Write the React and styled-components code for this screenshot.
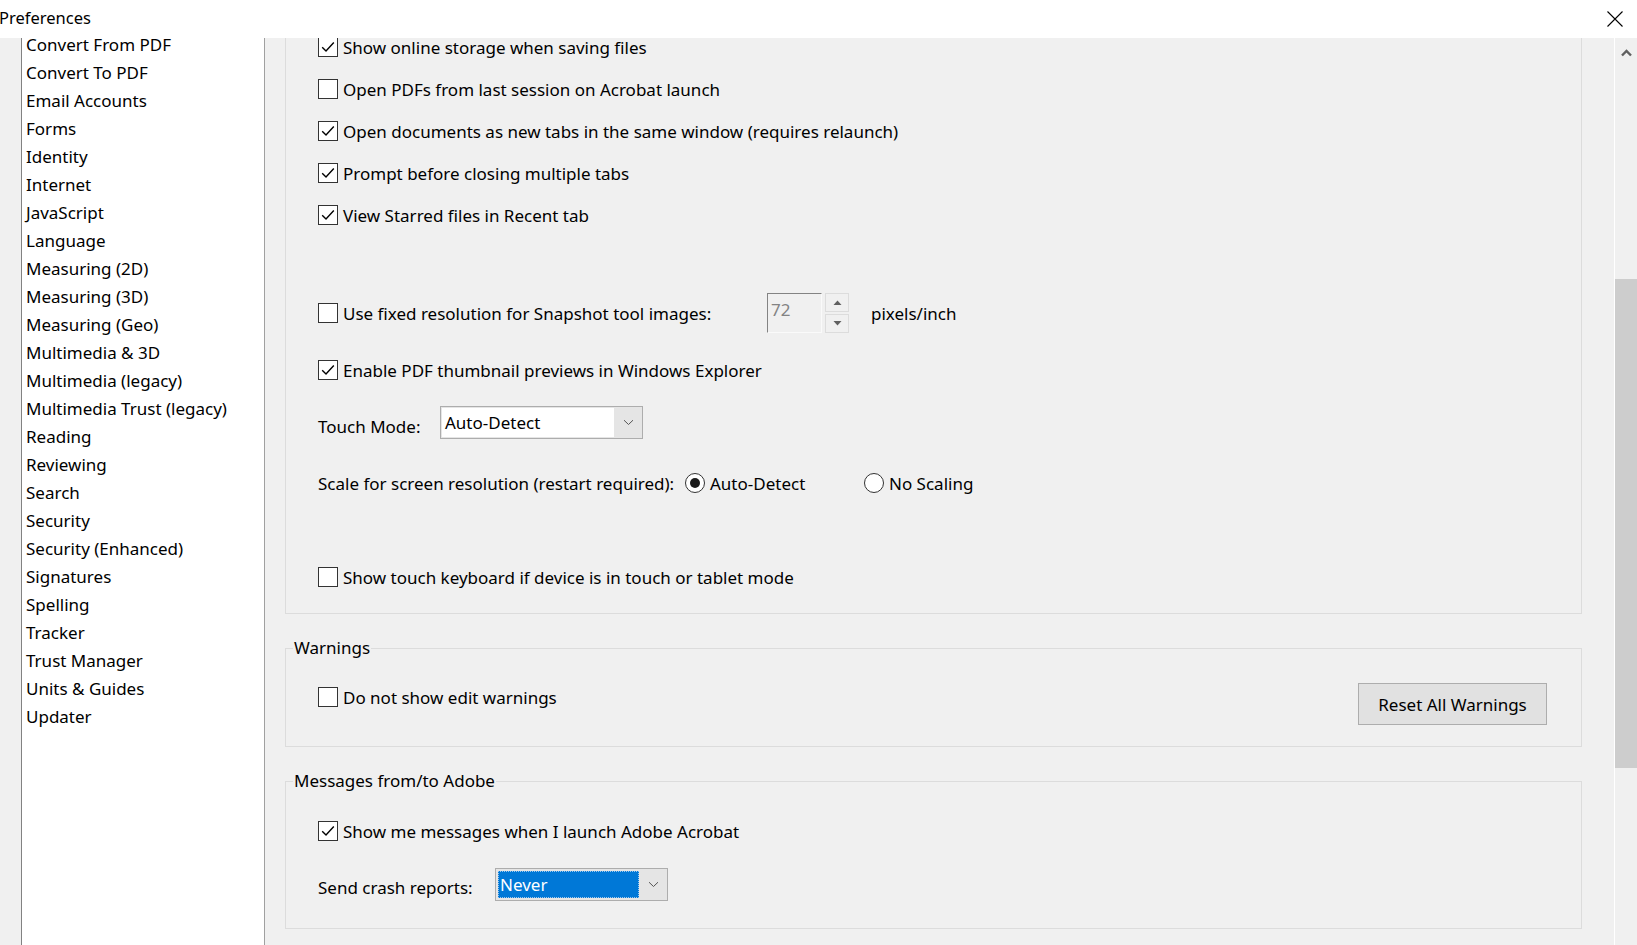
import React from 'react';
import styled, { createGlobalStyle } from 'styled-components';

const GlobalStyle = createGlobalStyle`
  html, body {
    margin: 0;
    padding: 0;
  }

  body {
    background: #f0f0f0;
    color: #000;
    font-family: "Noto Sans", "Open Sans", sans-serif;
    font-size: 17px;
    overflow: hidden;
  }

  * {
    box-sizing: border-box;
  }
`;

const Window = styled.div`
  width: 100vw;
  height: 100vh;
  display: flex;
  flex-direction: column;
  background: #f0f0f0;
`;

const TitleBar = styled.header`
  height: 38px;
  flex: none;
  display: flex;
  align-items: center;
  justify-content: space-between;
  padding-right: 14px;
  background: #fff;
`;

const Title = styled.span`
  font-size: 16.5px;
  line-height: 22px;
  margin-left: -1px;
  margin-top: -2px;
`;

const CloseButton = styled.button`
  width: 16px;
  height: 16px;
  padding: 0;
  border: 0;
  background: none;
  display: flex;
  align-items: center;
  justify-content: center;
`;

const Body = styled.div`
  flex: 1;
  min-height: 0;
  display: flex;
  padding-left: 21px;
`;

const Sidebar = styled.nav`
  width: 244px;
  flex: none;
  background: #fff;
  border-left: 1px solid #828282;
  border-right: 1px solid #a0a0a0;
`;

const SideList = styled.ul`
  list-style: none;
  margin: -7px 0 0;
  padding: 0 0 0 4px;
`;

const SideItem = styled.li`
  height: 28px;
  line-height: 28px;
  white-space: nowrap;
`;

const Content = styled.main`
  flex: 1;
  min-width: 0;
  display: flex;
`;

const ScrollArea = styled.div`
  flex: 1;
  overflow: hidden;
  padding: 0 32px 0 20px;
`;

const ScrollInner = styled.div`
  margin-top: ${(p) => -p.$scroll}px;
  display: flex;
  flex-direction: column;
`;

const Group = styled.fieldset`
  margin: ${(p) => p.$top || 0}px 0 0;
  padding: 0;
  min-width: 0;
  border: 1px solid #dcdcdc;
`;

const Legend = styled.legend`
  margin-left: 7px;
  padding: 0 1px;
  line-height: 24px;
  font-size: 17px;
`;

const GroupBody = styled.div`
  display: flex;
  flex-direction: column;
  padding: ${(p) => p.$pt || 0}px 32px ${(p) => p.$pb || 0}px 32px;
`;

const Row = styled.div`
  height: 42px;
  margin-top: ${(p) => p.$top || 0}px;
  display: flex;
  align-items: center;
`;

const SplitRow = styled.div`
  display: flex;
  align-items: flex-start;
  justify-content: space-between;
  padding-right: 2px;
`;

const CheckLabel = styled.label`
  display: flex;
  align-items: center;
  gap: 5px;
  width: ${(p) => (p.$width ? `${p.$width}px` : 'auto')};
  height: 42px;
  white-space: nowrap;
`;

const Box = styled.span`
  width: 20px;
  height: 20px;
  flex: none;
  display: flex;
  align-items: center;
  justify-content: center;
  background: #fff;
  border: 1px solid #333;
`;

const RadioDot = styled.span`
  width: 20px;
  height: 20px;
  flex: none;
  display: flex;
  align-items: center;
  justify-content: center;
  border-radius: 50%;
  background: #fff;
  border: 1px solid #333;

  &::after {
    content: '';
    display: ${(p) => (p.$on ? 'block' : 'none')};
    width: 10px;
    height: 10px;
    border-radius: 50%;
    background: #1a1a1a;
  }
`;

const RadioOption = styled.label`
  display: flex;
  align-items: center;
  gap: 5px;
  width: ${(p) => (p.$width ? `${p.$width}px` : 'auto')};
  white-space: nowrap;
`;

const FieldLabel = styled.span`
  min-width: ${(p) => p.$width}px;
  margin-top: ${(p) => p.$drop || 0}px;
  white-space: nowrap;
`;

const SpinField = styled.div`
  width: 55px;
  height: 40px;
  padding: 5px 0 0 3px;
  color: #838383;
  background: #f0f0f0;
  border-top: 1px solid #838383;
  border-left: 1px solid #838383;
  border-right: 1px solid #fafafa;
  border-bottom: 1px solid #fafafa;
  line-height: 22px;
`;

const SpinButtons = styled.div`
  margin-left: 3px;
  display: flex;
  flex-direction: column;
  gap: 2px;
`;

const SpinButton = styled.span`
  width: 24px;
  height: 19px;
  display: flex;
  align-items: center;
  justify-content: center;
  background: #f0f0f0;
  border: 1px solid #dcdcdc;
`;

const Unit = styled.span`
  margin-left: 22px;
`;

const Select = styled.div`
  width: ${(p) => p.$width}px;
  height: 33px;
  display: flex;
  padding: 1px 0 1px 1px;
  background: #e5e5e5;
  border: 1px solid #adadad;
`;

const SelectValue = styled.div`
  flex: 1;
  display: flex;
  align-items: center;
  padding-left: ${(p) => (p.$selected ? 2 : 3)}px;
  color: ${(p) => (p.$selected ? '#fff' : '#000')};
  background: ${(p) => (p.$selected ? '#0078d7' : '#fff')};
  outline: ${(p) => (p.$selected ? '1px dotted #9cc8ee' : 'none')};
  outline-offset: -1px;
  margin: ${(p) => (p.$selected ? '1px 0 1px 1px' : '0')};
`;

const SelectArrow = styled.div`
  width: 28px;
  flex: none;
  display: flex;
  align-items: center;
  justify-content: center;
`;

const ResetButton = styled.button`
  width: 189px;
  height: 42px;
  margin-top: 7px;
  padding: 0;
  font: inherit;
  color: #000;
  background: #e1e1e1;
  border: 1px solid #adadad;
`;

const ScrollBar = styled.div`
  width: 23px;
  flex: none;
  display: flex;
  flex-direction: column;
  background: #f0f0f0;
  border-left: 1px solid #fff;
`;

const ScrollArrow = styled.div`
  height: 30px;
  flex: none;
  display: flex;
  align-items: center;
  justify-content: center;
`;

const ScrollThumb = styled.div`
  flex: none;
  background: #cdcdcd;
`;

const sections = [
  'Convert From PDF',
  'Convert To PDF',
  'Email Accounts',
  'Forms',
  'Identity',
  'Internet',
  'JavaScript',
  'Language',
  'Measuring (2D)',
  'Measuring (3D)',
  'Measuring (Geo)',
  'Multimedia & 3D',
  'Multimedia (legacy)',
  'Multimedia Trust (legacy)',
  'Reading',
  'Reviewing',
  'Search',
  'Security',
  'Security (Enhanced)',
  'Signatures',
  'Spelling',
  'Tracker',
  'Trust Manager',
  'Units & Guides',
  'Updater',
];

const Check = ({ checked }) => (
  <Box>
    {checked && (
      <svg width="16" height="16" viewBox="0 0 16 16">
        <path d="M2.2 8.2 L6 12 L13.8 3.6" fill="none" stroke="#000" strokeWidth="1.4" />
      </svg>
    )}
  </Box>
);

const CheckOption = ({ checked, children, width }) => (
  <CheckLabel $width={width}>
    <Check checked={checked} />
    {children}
  </CheckLabel>
);

const Chevron = ({ color = '#555' }) => (
  <svg width="11" height="7" viewBox="0 0 11 7">
    <path d="M1 1.2 L5.5 5.5 L10 1.2" fill="none" stroke={color} strokeWidth="1" />
  </svg>
);

const Triangle = ({ up }) => (
  <svg width="9" height="5" viewBox="0 0 9 5">
    <path d={up ? 'M0.5 5 L4.5 0.5 L8.5 5 Z' : 'M0.5 0 L4.5 4.5 L8.5 0 Z'} fill="#606060" />
  </svg>
);

const Dropdown = ({ value, width, selected }) => (
  <Select $width={width}>
    <SelectValue $selected={selected}>{value}</SelectValue>
    <SelectArrow>
      <Chevron />
    </SelectArrow>
  </Select>
);

const App = () => {
  const scroll = { offset: 211, size: 489 };

  return (
    <Window>
      <GlobalStyle />
      <TitleBar>
        <Title>Preferences</Title>
        <CloseButton aria-label="Close">
          <svg width="16" height="16" viewBox="0 0 16 16">
            <path d="M0.5 0.5 L15.5 15.5 M15.5 0.5 L0.5 15.5" stroke="#000" strokeWidth="1.1" />
          </svg>
        </CloseButton>
      </TitleBar>

      <Body>
        <Sidebar>
          <SideList>
            {sections.map((s) => (
              <SideItem key={s}>{s}</SideItem>
            ))}
          </SideList>
        </Sidebar>

        <Content>
          <ScrollArea>
            <ScrollInner $scroll={13}>
              <Group>
                <GroupBody $pb={15}>
                  <Row>
                    <CheckOption checked>Show online storage when saving files</CheckOption>
                  </Row>
                  <Row>
                    <CheckOption>Open PDFs from last session on Acrobat launch</CheckOption>
                  </Row>
                  <Row>
                    <CheckOption checked>
                      Open documents as new tabs in the same window (requires relaunch)
                    </CheckOption>
                  </Row>
                  <Row>
                    <CheckOption checked>Prompt before closing multiple tabs</CheckOption>
                  </Row>
                  <Row>
                    <CheckOption checked>View Starred files in Recent tab</CheckOption>
                  </Row>

                  <Row $top={56}>
                    <CheckOption width={449}>Use fixed resolution for Snapshot tool images:</CheckOption>
                    <SpinField>72</SpinField>
                    <SpinButtons>
                      <SpinButton>
                        <Triangle up />
                      </SpinButton>
                      <SpinButton>
                        <Triangle />
                      </SpinButton>
                    </SpinButtons>
                    <Unit>pixels/inch</Unit>
                  </Row>

                  <Row $top={15}>
                    <CheckOption checked>Enable PDF thumbnail previews in Windows Explorer</CheckOption>
                  </Row>

                  <Row $top={10}>
                    <FieldLabel $width={122} $drop={9}>
                      Touch Mode:
                    </FieldLabel>
                    <Dropdown value="Auto-Detect" width={203} />
                  </Row>

                  <Row $top={19}>
                    <FieldLabel $width={367}>Scale for screen resolution (restart required):</FieldLabel>
                    <RadioOption $width={179}>
                      <RadioDot $on />
                      Auto-Detect
                    </RadioOption>
                    <RadioOption>
                      <RadioDot />
                      No Scaling
                    </RadioOption>
                  </Row>

                  <Row $top={52}>
                    <CheckOption>Show touch keyboard if device is in touch or tablet mode</CheckOption>
                  </Row>
                </GroupBody>
              </Group>

              <Group $top={22}>
                <Legend>Warnings</Legend>
                <GroupBody $pt={16} $pb={21}>
                  <SplitRow>
                    <CheckOption>Do not show edit warnings</CheckOption>
                    <ResetButton>Reset All Warnings</ResetButton>
                  </SplitRow>
                </GroupBody>
              </Group>

              <Group $top={22}>
                <Legend>Messages from/to Adobe</Legend>
                <GroupBody $pt={17} $pb={23}>
                  <Row>
                    <CheckOption checked>Show me messages when I launch Adobe Acrobat</CheckOption>
                  </Row>
                  <Row $top={11}>
                    <FieldLabel $width={177} $drop={7}>
                      Send crash reports:
                    </FieldLabel>
                    <Dropdown value="Never" width={173} selected />
                  </Row>
                </GroupBody>
              </Group>
            </ScrollInner>
          </ScrollArea>

          <ScrollBar>
            <ScrollArrow>
              <svg width="11" height="8" viewBox="0 0 11 8">
                <path d="M1 6.5 L5.5 2 L10 6.5" fill="none" stroke="#606060" strokeWidth="2.4" />
              </svg>
            </ScrollArrow>
            <ScrollThumb style={{ marginTop: scroll.offset, height: scroll.size }} />
          </ScrollBar>
        </Content>
      </Body>
    </Window>
  );
};

export default App;
